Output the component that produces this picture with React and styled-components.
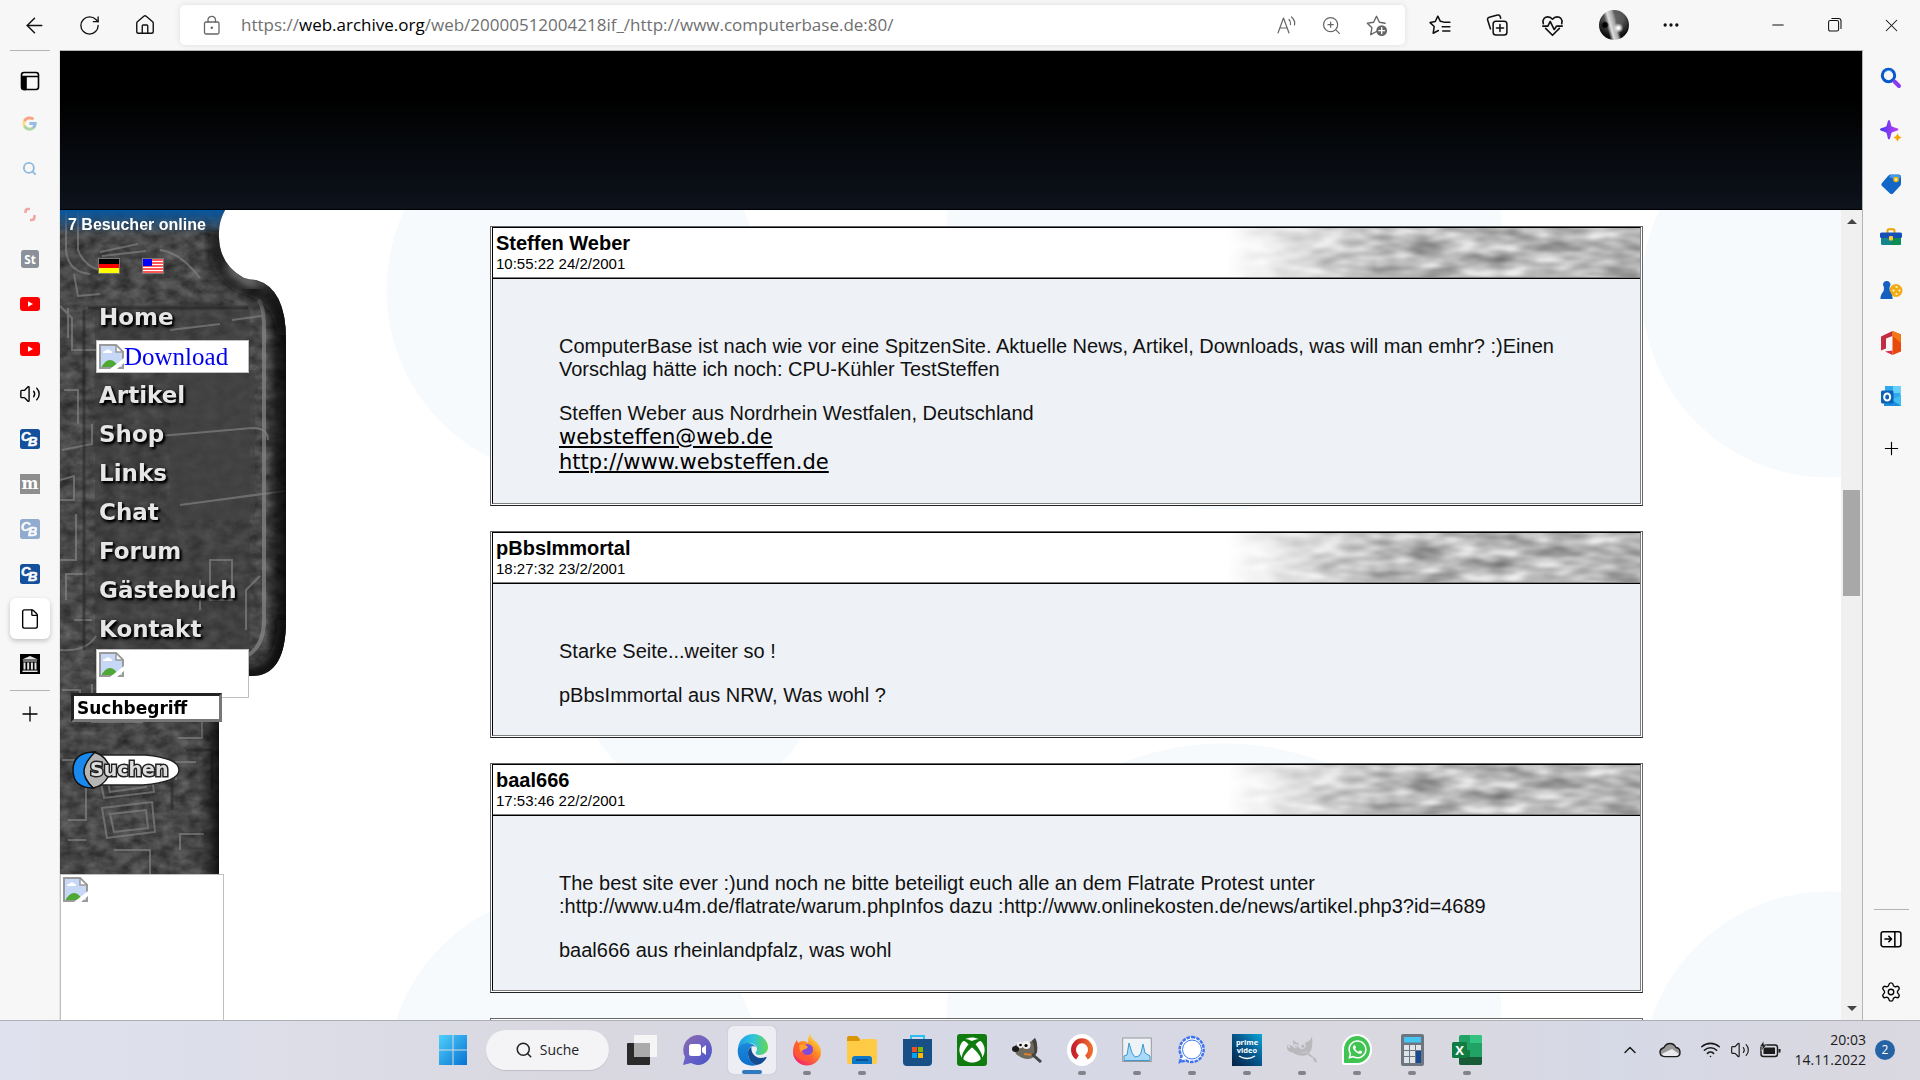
import React from "react";
import styled, { createGlobalStyle, css } from "styled-components";
import {
  ArrowLeft,
  RotateCw,
  House,
  ZoomIn,
  Search,
  Plus,
  Minus,
  X,
  Ellipsis,
  Volume2,
  File,
  Wifi,
  ChevronUp,
  Settings,
} from "lucide-react";
import { FcGoogle } from "react-icons/fc";
import { FaXbox, FaWhatsapp } from "react-icons/fa";
import { SiGimp } from "react-icons/si";

const CHROME = "#f7f7f7";
const LINE = "#b4b4b4";
const UI_FONT = `"Open Sans", "Noto Sans", sans-serif`;
const PAGE_FONT = `"Liberation Sans", Arial, sans-serif`;
const VERDANA = `"DejaVu Sans", Verdana, sans-serif`;

const GlobalStyle = createGlobalStyle`
  * { box-sizing: border-box; }
  body { margin: 0; background: ${CHROME}; font-family: ${PAGE_FONT}; }
  button { border: 0; padding: 0; background: none; color: inherit; font: inherit; }
  svg { display: block; flex: none; }
`;

const center = css`
  display: flex;
  align-items: center;
  justify-content: center;
`;

const Desktop = styled.div`
  height: 100vh;
  display: flex;
  flex-direction: column;
  overflow: hidden;
`;

const Toolbar = styled.header`
  height: 50px;
  flex: none;
  display: flex;
  align-items: center;
  padding: 0 1px 0 7px;
  color: #111;
`;

const ToolButton = styled.button`
  ${center};
  width: ${(props) => props.$width || 55}px;
  height: 40px;
`;

const AddressBar = styled.div`
  flex: 1;
  height: 40px;
  margin-left: 8px;
  padding: 0 6px 0 22px;
  display: flex;
  align-items: center;
  gap: 19px;
  background: #fff;
  border-radius: 5px;
  box-shadow: 0 0 6px rgba(0, 0, 0, 0.1);
  color: #666;
`;

const Url = styled.span`
  flex: 1;
  font: 17px/24px ${UI_FONT};
  color: #707070;
  white-space: nowrap;

  b {
    font-weight: 400;
    color: #000;
  }
`;

const AddressTools = styled.div`
  display: flex;
`;

const Avatar = styled.span`
  width: 30px;
  height: 30px;
  border-radius: 50%;
  background: radial-gradient(circle at 20% 50%, #000 0 2px, transparent 4px),
    radial-gradient(circle at 65% 60%, #fff 0 1px, transparent 5px),
    linear-gradient(75deg, transparent 30%, #ddd 40%, #aaa 52%, transparent 60%),
    radial-gradient(circle at 50% 25%, #666 0, #555 35%, #111 70%);
`;

const Middle = styled.div`
  flex: 1;
  min-height: 0;
  display: flex;
`;

const LeftRail = styled.nav`
  width: 60px;
  flex: none;
  display: flex;
  flex-direction: column;
  align-items: center;
  border-right: 1px solid #e4e4e4;
`;

const Separator = styled.hr`
  width: ${(props) => props.$width || 40}px;
  height: 1px;
  margin: 0;
  border: 0;
  background: ${LINE};
`;

const Tab = styled.button`
  ${center};
  width: 40px;
  height: 41px;
  margin: 2px 0;
  border-radius: 6px;
  opacity: ${(props) => (props.$faded ? 0.45 : 1)};
  ${(props) =>
    props.$active &&
    css`
      background: #fff;
      box-shadow: 0 2px 5px rgba(0, 0, 0, 0.22);
    `}
`;

const TabList = styled.div`
  display: flex;
  flex-direction: column;
  padding: 7px 0 4px;

  ${Tab}:first-child {
    margin-bottom: 0;
  }
`;

const RightRail = styled.aside`
  width: 57px;
  flex: none;
  display: flex;
  flex-direction: column;
  align-items: center;
  padding: 1px 1px 2px 0;
`;

const RailButton = styled.button`
  ${center};
  width: 40px;
  height: 53px;
`;

const Spacer = styled.div`
  flex: 1;
`;

const RailFooter = styled.div`
  display: flex;
  flex-direction: column;
  align-items: center;
  gap: 2px;
`;

const RailFooterButtons = styled.div`
  display: flex;
  flex-direction: column;
`;

const Viewport = styled.div`
  flex: 1;
  min-width: 0;
  display: flex;
  flex-direction: column;
  border: 1px solid ${LINE};
  border-width: 1px 1px 0 0;
`;

const Banner = styled.div`
  height: 159px;
  flex: none;
  background: linear-gradient(#000 30%, #0d131c);
  border-bottom: 1px solid #000;
`;

const Frames = styled.div`
  flex: 1;
  min-height: 0;
  display: flex;
`;

const blob = (x, y, r) =>
  `radial-gradient(circle at ${x}px ${y}px, #f6fafd ${r}px, transparent ${r + 1}px)`;

const blobs = [
  blob(514, 80, 187),
  blob(1164, 22, 277),
  blob(1769, 80, 187),
  blob(639, 466, 119),
  blob(514, 869, 187),
  blob(1164, 811, 277),
  blob(1769, 869, 187),
].join(",");

const Page = styled.div`
  flex: 1;
  min-width: 0;
  display: flex;
  overflow: hidden;
  background: ${blobs} #fff;
`;

const Scrollbar = styled.div`
  width: 21px;
  flex: none;
  display: flex;
  flex-direction: column;
  align-items: center;
  padding: 9px 0;
  background: #f0f0f0;
`;

const Arrow = styled.span`
  border: 5px solid transparent;
  border-${(props) => (props.$down ? "top" : "bottom")}-color: #444;
  border-${(props) => (props.$down ? "bottom" : "top")}-width: 0;
`;

const Track = styled.div`
  flex: 1;
  display: grid;
  grid-template-rows: 35fr 14fr 54fr;
`;

const Thumb = styled.div`
  grid-row: 2;
  width: 17px;
  background: #a8a8a8;
`;

const Sidebar = styled.aside`
  position: relative;
  width: 230px;
  flex: none;
`;

const Backdrop = styled.svg`
  position: absolute;
  inset: 0;
`;

const SidebarContent = styled.div`
  position: relative;
  display: flex;
  flex-direction: column;
  align-items: flex-start;
`;

const Visitors = styled.div`
  padding: 5px 8px 0;
  font: bold 16px/19px ${PAGE_FONT};
  color: #fff;
`;

const Flags = styled.div`
  display: flex;
  gap: 22px;
  padding: 24px 38px;
`;

const Menu = styled.nav`
  display: flex;
  flex-direction: column;
  padding-left: 36px;
`;

const MenuLink = styled.a`
  height: 39px;
  padding-left: 3px;
  font: bold 23px/39px ${VERDANA};
  color: #e6e6e6;
  text-decoration: none;
  text-shadow: 2px 2px 2px #000, 1px 2px 4px #000;
`;

const BrokenLink = styled.a`
  width: 153px;
  height: 33px;
  margin: 3px 0;
  padding-left: 2px;
  display: flex;
  align-items: center;
  border: 1px solid #c0c0c0;
  background: #fff;
  font: 25px/30px "Liberation Serif", "Times New Roman", serif;
  color: #0000ee;
  text-decoration: none;
`;

const BrokenBox = styled.div`
  width: ${(props) => props.$width}px;
  height: ${(props) => props.$height}px;
  padding: 2px;
  border: 1px solid #c0c0c0;
  background: #fff;
`;

const MenuImage = styled.div`
  padding-left: 36px;
`;

const SearchForm = styled.form`
  display: flex;
  flex-direction: column;
  align-items: flex-start;
  margin-top: -5px;
  padding: 0 0 84px 11px;
  gap: 28px;
`;

const SearchInput = styled.input`
  width: 151px;
  height: 29px;
  padding: 0 3px;
  border: 3px inset #777;
  background: #fff;
  font: bold 17px/20px ${VERDANA};
  color: #000;
`;

const Main = styled.main`
  flex: 1;
  min-width: 0;
  display: flex;
  flex-direction: column;
  gap: 25px;
  padding: 16px 198px 0 200px;
`;

const Post = styled.article`
  flex: none;
  padding: 0 1px 1px 1px;
  border: 1px solid #666;
  border-bottom-color: #222;
  background: #fff;
`;

const PostInner = styled.div`
  border: 1px solid #000;
  border-right-color: #808080;
  border-bottom-color: #808080;
`;

const PostHeader = styled.header`
  height: 50px;
  display: flex;
  justify-content: space-between;
  border-bottom: 1px solid #808080;
  background: #fff;
`;

const PostTitle = styled.div`
  padding: 4px 3px;
`;

const Author = styled.h2`
  margin: 0;
  font: bold 20px/23px ${PAGE_FONT};
  color: #000;
`;

const Time = styled.time`
  display: block;
  font: 15px/17px ${PAGE_FONT};
  color: #000;
`;

const PostBody = styled.div`
  padding: 56px 60px 28px 66px;
  border-top: 1px solid #000;
  background: #eef1f6;
  font: 20px/23px ${PAGE_FONT};
  color: #111;
`;

const Message = styled.p`
  margin: 0 0 21px;
`;

const ContactLink = styled.a`
  display: table;
  font: 21px/25px ${VERDANA};
  color: #000;
  text-decoration: underline;
`;

const Taskbar = styled.footer`
  height: 60px;
  flex: none;
  display: grid;
  grid-template-columns: 1fr auto 1fr;
  align-items: center;
  padding-bottom: 2px;
  border-top: 1px solid #aeaeb8;
  background: linear-gradient(90deg, #dfe2ee 0, #d9d8e1 30%, #d6d8e6 55%, #dad8df 72%, #d6d9e6 84%, #dad8e0);
`;

const Apps = styled.div`
  grid-column: 2;
  display: flex;
`;

const AppButton = styled.button`
  position: relative;
  ${center};
  width: 55px;
  height: 48px;

  &::after {
    content: "";
    display: ${(props) => (props.$state ? "block" : "none")};
    position: absolute;
    bottom: ${(props) => (props.$state === "active" ? 0 : -1)}px;
    width: ${(props) => (props.$state === "active" ? 20 : 8)}px;
    height: 4px;
    border-radius: 2px;
    background: ${(props) => (props.$state === "active" ? "#3079bf" : "#82828a")};
  }
`;

const AppTile = styled.span`
  ${center};
  width: 48px;
  height: 48px;
  border-radius: 5px;
  ${(props) =>
    props.$active &&
    css`
      background: #eeedf3;
      box-shadow: 0 0 1px rgba(0, 0, 0, 0.3);
    `}
`;

const SearchPill = styled.button`
  width: 123px;
  height: 40px;
  margin: 4px 6px 4px 5px;
  display: flex;
  align-items: center;
  justify-content: center;
  gap: 7px;
  border-radius: 20px;
  background: #f4f4f7;
  box-shadow: 0 1px 1px rgba(0, 0, 0, 0.12);
  font: 14px/20px ${UI_FONT};
  color: #222;
`;

const Tray = styled.div`
  grid-column: 3;
  justify-self: end;
  display: flex;
  align-items: center;
  padding-right: 25px;
  color: #1b1b1b;
`;

const TrayItem = styled.button`
  ${center};
  width: ${(props) => props.$width || 30}px;
  height: 40px;
`;

const Clock = styled.div`
  width: 76px;
  margin-right: 9px;
  font: 14px/20px ${UI_FONT};
  text-align: right;
`;

const Badge = styled.span`
  ${center};
  width: 20px;
  height: 20px;
  border-radius: 50%;
  background: #2563a5;
  color: #fff;
  font: 12px/20px ${UI_FONT};
`;

/* ---------- toolbar drawings ---------- */

const Line = ({ size = 20, children, width = 1.4, ...rest }) => (
  <svg
    width={size}
    height={size}
    viewBox="0 0 20 20"
    fill="none"
    stroke="currentColor"
    strokeWidth={width}
    strokeLinecap="round"
    strokeLinejoin="round"
    {...rest}
  >
    {children}
  </svg>
);

const LockIcon = () => (
  <Line size={20} width={1.3}>
    <rect x="2.500" y="7" width="14.500" height="12" rx="1.500" />
    <path d="M6 7V4.500a3.800 3.800 0 0 1 7.500 0V7" />
    <circle cx="9.800" cy="12.700" r=".6" fill="currentColor" />
  </Line>
);

const ReadAloudIcon = () => (
  <Line size={20} width={1.2}>
    <path d="M1 18 6.500 3 12 18M3 13h7M12 4.500q2 2 1.500 5M14.500 2q4 3.500 3 8" />
  </Line>
);

const StarAddIcon = () => (
  <Line size={23} width={1.2}>
    <path d="M17.500 8 12.500 7.200 10 2 7.500 7.200 2 8l4 4-1 6 5-2.800" />
    <circle cx="14.500" cy="14.500" r="4.700" fill="currentColor" stroke="none" />
    <path d="M14.500 12v5M12 14.500h5" stroke="#fff" />
  </Line>
);

const FavoritesIcon = () => (
  <Line size={22}>
    <path d="M12.500 7 10.200 6.500 8 2 5.700 6.800 1 7.800l3.700 3.600-.9 6.100L8.500 15M13.500 7.500H19M12 11.500h7M12.500 15.500H19" />
  </Line>
);

const CollectionsIcon = () => (
  <Line size={22}>
    <rect x="6.500" y="6.500" width="12.500" height="12.500" rx="2.500" />
    <path d="M12.700 9.500v6.500M9.500 12.700H16M4 13.500 1.500 5.500Q1 3.500 3 3l7.500-2q2-.5 2.500 1.500l.3 1.300" />
  </Line>
);

const HeartIcon = () => (
  <Line size={23}>
    <path d="M2 8.500C.8 4.500 3.500 2.500 6 2.500c2 0 3.200 1 4 2 .8-1 2-2 4-2 2.500 0 5.200 2 4 6M4 12.500l6 6 6-6M1.500 10.500H6l2-4 3.500 7 2-3h5" />
  </Line>
);

const RestoreIcon = () => (
  <Line size={16} width={1.3}>
    <rect x="2" y="4.500" width="12.500" height="13" rx="2" />
    <path d="M6 2h8.500Q17.500 2 17.500 5v9.500" />
  </Line>
);

/* ---------- tab drawings ---------- */

const VerticalTabsIcon = () => (
  <Line size={20} width={1.6}>
    <rect x="1.500" y="1.500" width="17" height="17" rx="2.500" />
    <path d="M2 5.500h16" />
    <path d="M2 6h4v12.500H3.500Q2 18 2 16.500z" fill="currentColor" />
  </Line>
);

const SnipIcon = () => (
  <svg width="20" height="20" viewBox="0 0 20 20" fill="none" stroke="#e8453c" strokeWidth="2.600">
    <path d="M5.500 9V7.500Q5.500 5 8 5h2M10 16h1.500q3 0 3-3v-2" />
  </svg>
);

const LetterIcon = ({ letter, color, serif, size }) => (
  <svg width={size} height={size} viewBox="0 0 20 20">
    <rect width="20" height="20" rx={serif ? 0 : 3} fill={color} />
    <text
      x="10"
      y="15"
      textAnchor="middle"
      fontSize={serif ? 16 : 13}
      fontWeight="bold"
      fontFamily={serif ? "DejaVu Serif" : "Open Sans"}
      fill="#fff"
    >
      {letter}
    </text>
  </svg>
);

const YoutubeIcon = () => (
  <svg width="20" height="14" viewBox="0 0 20 14">
    <rect width="20" height="14" rx="3" fill="#f00" />
    <path d="M8 4.200v5.600L13 7z" fill="#fff" />
  </svg>
);

const BaseIcon = () => (
  <svg width="20" height="20" viewBox="0 0 20 20">
    <rect width="20" height="20" rx="2.500" fill="#14509b" />
    <g fill="#fff" stroke="#fff" strokeWidth=".5" fontFamily="Liberation Sans" fontWeight="bold" fontStyle="italic">
      <text x="1" y="12" fontSize="13">C</text>
      <text x="8" y="17" fontSize="13">B</text>
    </g>
  </svg>
);

const ArchiveIcon = () => (
  <svg width="20" height="20" viewBox="0 0 20 20">
    <rect width="20" height="20" fill="#000" />
    <path d="M2 5.500 10 2l8 3.500zM3 6.500h14v1H3zM3.500 8.500h2v7h-2zM7.200 8.500h2v7h-2zM10.900 8.500h2v7h-2zM14.500 8.500h2v7h-2zM2.500 16.500h15v1.500h-15z" fill="#e4e4e4" />
  </svg>
);

/* ---------- right rail drawings ---------- */

const BlueSearchIcon = () => (
  <svg width="22" height="22" viewBox="0 0 22 22" fill="none">
    <circle cx="8.500" cy="8.500" r="6.200" stroke="#0a57c9" strokeWidth="3" />
    <path d="M4 6a5.500 5.500 0 0 1 8-1.500" stroke="#45a5f5" strokeWidth="1" />
    <path d="m14.500 14.500 4.500 4.500" stroke="#8a3bf0" strokeWidth="4" strokeLinecap="round" />
  </svg>
);

const SparkleIcon = () => (
  <svg width="24" height="24" viewBox="0 0 24 24">
    <defs>
      <linearGradient id="spark">
        <stop stopColor="#4238f0" />
        <stop offset="1" stopColor="#c63ff2" />
      </linearGradient>
    </defs>
    <path d="M10 1c1.500 0 1.700 5 2.700 6.300C14 8.500 19.500 9 19.500 10.500s-5.500 2-6.800 3.200c-1 1.300-1.200 6.800-2.700 6.800s-1.700-5.500-2.700-6.800C6 12.500 1 12 1 10.500s5-2 6.300-3.200C8.300 6 8.500 1 10 1z" fill="url(#spark)" />
    <path d="M18.500 14q.9 3.600 4.500 4.500-3.600.9-4.500 4.500-.9-3.600-4.500-4.500 3.600-.9 4.500-4.500z" fill="#f5a800" />
  </svg>
);

const TagIcon = () => (
  <svg width="22" height="22" viewBox="0 0 22 22">
    <path d="M10.500 1.500h8q2.500 0 2.500 2.500v6.500q0 1.500-1 2.500l-7 7.500q-1.500 1.500-3 0l-8-7.500q-1.500-1.500 0-3l6-7q1-1.500 2.500-1.500z" fill="#1266c8" />
    <path d="M10.500 2h8q2 0 2.500 2l-4 3-8-3z" fill="#3d9be8" />
    <circle cx="16" cy="6.500" r="2" fill="#fff4c0" stroke="#f7b500" strokeWidth="1.600" />
  </svg>
);

const ToolboxIcon = () => (
  <svg width="22" height="18" viewBox="0 0 22 18">
    <path d="M7.500 5V2.500Q7.500 1.200 9 1.200h4q1.500 0 1.500 1.300V5" fill="none" stroke="#e9a400" strokeWidth="2" />
    <rect x="1" y="8" width="20" height="9" rx="1.500" fill="#13858b" />
    <path d="M11 8h10v7.500Q21 17 19.500 17H11z" fill="#0d8c55" />
    <rect y="4.500" width="22" height="5.500" rx="1.500" fill="#1450b8" />
    <rect x="9" y="8" width="4" height="4.500" rx="1" fill="#ffc83a" />
  </svg>
);

const GamesIcon = () => (
  <svg width="23" height="20" viewBox="0 0 23 20">
    <circle cx="16" cy="10.500" r="6.500" fill="#efac16" />
    <path d="M7 1a3.500 3.500 0 0 1 2.800 5.600L9.500 8q-.5 3 2 6l1 3v2H.5v-2l1-3q3-3 2.500-6l-.3-1.400A3.500 3.500 0 0 1 7 1z" fill="#155fc0" />
    <g fill="#fff6cf">
      <circle cx="16.500" cy="7" r="1.100" />
      <circle cx="13.500" cy="10.500" r="1.100" />
      <circle cx="19.500" cy="10.500" r="1.100" />
      <circle cx="16.500" cy="14" r="1.100" />
    </g>
  </svg>
);

const OfficeIcon = () => (
  <svg width="22" height="26" viewBox="0 0 22 26">
    <path d="M1 6.500 12.500 1v5L6 8.500v10L1 20.500z" fill="#c22d42" />
    <path d="M12.500 1 21 4.500v17L12.500 25z" fill="#e74a0c" />
    <path d="M12.500 1 21 4.500V13l-8.500-7z" fill="#f27813" />
    <path d="m5 21.500 7.500-1V25z" fill="#db3048" />
  </svg>
);

const OutlookIcon = () => (
  <svg width="22" height="22" viewBox="0 0 22 22">
    <rect x="5" y="1" width="15.500" height="14" fill="#2fa9ee" />
    <path d="M13 1h7.500v7H13z" fill="#66d0fb" />
    <path d="m4 12 8 4 9-6v11H4z" fill="#1a8ddd" />
    <path d="m12 15 9-5v11z" fill="#43bdf6" />
    <rect x="1" y="5.500" width="12.500" height="13" rx="1.500" fill="#0d62b8" />
    <ellipse cx="7.200" cy="12" rx="3" ry="3.500" fill="none" stroke="#fff" strokeWidth="2" />
  </svg>
);

const PanelIcon = () => (
  <Line size={22}>
    <rect x="1" y="3.500" width="18" height="13.500" rx="2" />
    <path d="M13.500 3.500V17M4.500 10h5.500M8 7.500l2.500 2.500L8 12.500" />
  </Line>
);

/* ---------- page drawings ---------- */

const BrokenImage = () => (
  <svg width="25" height="25" viewBox="0 0 25 25">
    <path d="M1 1h16l7 7v16H1z" fill="#c6d8f5" />
    <path d="M4 9q0-2.500 3-2.500Q8.500 4 11 6.500 13.500 7 13 9z" fill="#fff" />
    <path d="M2 24q4-8 9-8t9 8z" fill="#4ea834" />
    <path d="M12 24H1V1h16l7 7v16H12" fill="none" stroke="#9a9a9a" strokeWidth="2" />
    <path d="m11 25 14-11v5l-7 6z" fill="#fff" />
    <path d="M17 1v7h7z" fill="#fff" stroke="#9a9a9a" strokeWidth="1.500" />
  </svg>
);

const GermanFlag = () => (
  <svg width="22" height="16" viewBox="0 0 22 16">
    <rect width="22" height="16" fill="#777" />
    <path d="M1 1h20v5H1z" fill="#000" />
    <path d="M1 6h20v4H1z" fill="#f00" />
    <path d="M1 10h20v5H1z" fill="#ff0" />
  </svg>
);

const UsFlag = () => (
  <svg width="22" height="16" viewBox="0 0 22 16">
    <rect width="22" height="16" fill="#777" />
    <path d="M1 1h20v14H1z" fill="#fff" />
    <path d="M1 2h20M1 5h20M1 8h20M1 11h20M1 14h20" stroke="#f22" strokeWidth="1.600" />
    <path d="M1 1h9v7H1z" fill="#00f" />
  </svg>
);

const BODY =
  "M0 0H165Q158 12 159 28Q160 55 184 68Q190 70 196 70Q226 78 226 130V410Q226 466 192 466H159V664H0Z";

const CircuitBackdrop = () => (
  <Backdrop width="230" height="664" viewBox="0 0 230 664" aria-hidden="true">
    <defs>
      <clipPath id="board">
        <path d={BODY} />
      </clipPath>
      <linearGradient id="sky" x2="0" y2="1">
        <stop stopColor="#07569f" />
        <stop offset="1" stopColor="#07569f" stopOpacity="0" />
      </linearGradient>
      <linearGradient id="edge">
        <stop stopColor="#000" stopOpacity="0" />
        <stop offset="1" stopColor="#000" stopOpacity=".75" />
      </linearGradient>
      <linearGradient id="side">
        <stop stopColor="#000" stopOpacity="0" />
        <stop offset=".55" stopColor="#000" stopOpacity=".6" />
        <stop offset="1" stopColor="#000" stopOpacity=".8" />
      </linearGradient>
      <filter id="soft" x="-20%" y="-20%" width="140%" height="140%">
        <feGaussianBlur stdDeviation="5" />
      </filter>
      <filter id="etch" x="0" y="0" width="100%" height="100%" colorInterpolationFilters="sRGB">
        <feTurbulence type="fractalNoise" baseFrequency=".07 .1" numOctaves="3" seed="8" />
        <feColorMatrix values=".3 0 0 0 .13  .3 0 0 0 .13  .3 0 0 0 .13  0 0 0 0 1" />
      </filter>
    </defs>
    <g clipPath="url(#board)">
      <rect width="230" height="664" filter="url(#etch)" />
      <path d="M35 95H190V450H35z" fill="#3c3c3c" opacity=".5" />
      <path d="M110 160h85v150h-85z" fill="#424242" opacity=".6" />
      <g fill="none" stroke="#858585" strokeWidth="2" opacity=".65">
        <path d="M6 0V40Q8 62 30 64M18 0V40Q24 56 40 60M14 64l4 22 22-2M40 42l38-8M42 46l44-5" />
        <path d="M0 96l12 12v32h30M2 240l30-6v-20M0 350h16v-46M0 440q26 2 36-14M8 128v-30M4 180h14v34M0 270l14-4v24H0M6 390v-26h20M14 410h18" />
        <path d="M100 226l92-8q16 0 16 12M120 295l105-14M110 120l50-6M172 110l30-4M100 40q20 2 40 28M150 350v40h22v-40zM140 370v30M186 420v-40l14-14" />
        <path d="M32 474V512h50V474M40 490h30M98 466v44M2 480h18v22" />
        <path d="M38 558l52-6 4 30-50 6zM46 564l38-5 2 18-36 5z" />
        <path d="M42 598l50-6 3 30-48 6zM50 604l36-4 2 18-34 4zM54 640h36v24M2 550h24v60H8M8 630h18M122 494h20v34h-24M116 570v-18h20M120 640v-16h24" />
      </g>
      <g fill="none" stroke="#222" strokeWidth="3" opacity=".5">
        <path d="M24 100v340M28 98h160M112 554v46M126 540h26v40" />
      </g>
      <path d="M198 90q6 4 6 30V410Q204 440 182 448" fill="none" stroke="#888" strokeWidth="4" opacity=".7" />
      <rect x="206" y="70" width="20" height="396" fill="url(#side)" />
      <g fill="none" stroke="#0a0a0a" strokeWidth="18" filter="url(#soft)">
        <path d="M160 22Q150 58 184 76Q222 84 226 125" opacity=".75" />
        <path d="M226 410Q226 466 180 466" opacity=".9" />
      </g>
      <path d="M168 56q14 16 30 19" fill="none" stroke="#8a8a8a" strokeWidth="7" filter="url(#soft)" />
      <rect x="139" y="466" width="20" height="198" fill="url(#edge)" />
      <rect width="230" height="24" fill="url(#sky)" />
    </g>
  </Backdrop>
);

const SuchenButton = () => (
  <svg width="110" height="40" viewBox="0 0 110 40">
    <path d="M24 5h50q34 3 34 15T72 35H24z" fill="#fff" stroke="#222" strokeWidth="1.500" />
    <path d="M22 2Q32 4 37 13v14Q32 36 22 38Q12 28 12 20T22 2z" fill="#b5b5b5" stroke="#111" strokeWidth="1.500" />
    <path d="M24 2Q2 2 2 20t20 18Q12 28 13 20T24 2z" fill="#1889ee" stroke="#111" strokeWidth="1.500" />
    <text
      x="19"
      y="26"
      fontFamily="DejaVu Sans"
      fontWeight="bold"
      fontSize="19"
      fill="#ddd"
      stroke="#222"
      strokeWidth="3"
      paintOrder="stroke"
    >
      Suchen
    </text>
  </svg>
);

const Grain = ({ id }) => (
  <svg width="430" height="49" viewBox="0 0 430 49" aria-hidden="true">
    <defs>
      <filter id={`grain${id}`} x="0" y="0" width="100%" height="100%" colorInterpolationFilters="sRGB">
        <feTurbulence type="fractalNoise" baseFrequency=".03 .08" numOctaves="2" seed="11" />
        <feColorMatrix values=".65 0 0 0 .4  .65 0 0 0 .4  .65 0 0 0 .4  0 0 0 0 1" />
      </filter>
      <linearGradient id={`fade${id}`}>
        <stop offset=".04" stopColor="#fff" />
        <stop offset=".4" stopColor="#fff" stopOpacity="0" />
      </linearGradient>
    </defs>
    <rect width="430" height="49" filter={`url(#grain${id})`} />
    <rect width="430" height="49" fill={`url(#fade${id})`} />
  </svg>
);

/* ---------- taskbar drawings ---------- */

const WindowsLogo = () => (
  <svg width="30" height="32" viewBox="0 0 30 32">
    <defs>
      <linearGradient id="win" x2="1" y2="1">
        <stop stopColor="#50d0fb" />
        <stop offset="1" stopColor="#0672d2" />
      </linearGradient>
    </defs>
    <path d="M1 1h13.500v14.500H1zM15.500 1H29v14.500H15.500zM1 16.500h13.500V31H1zM15.500 16.500H29V31H15.500z" fill="url(#win)" />
  </svg>
);

const TaskViewIcon = () => (
  <svg width="30" height="30" viewBox="0 0 30 30">
    <rect y="8" width="23" height="22" rx="1" fill="#2a2a2a" />
    <rect x="7" width="23" height="22" rx="1" fill="#f5f5f5" />
    <path d="M7 8h16v14H7z" fill="#ababab" />
  </svg>
);

const TeamsIcon = () => (
  <svg width="30" height="32" viewBox="0 0 30 32">
    <defs>
      <linearGradient id="chat" x2=".8" y2="1">
        <stop stopColor="#8a6aa8" />
        <stop offset=".5" stopColor="#6f63c4" />
        <stop offset="1" stopColor="#4d55c8" />
      </linearGradient>
    </defs>
    <path d="M15 1a14 15 0 1 1-6 28L1 31l2-8A15 15 0 0 1 15 1z" fill="url(#chat)" />
    <rect x="7" y="10" width="12" height="12" rx="2.500" fill="#fff" />
    <path d="m20 14 4-3v10l-4-3z" fill="#fff" />
  </svg>
);

const EdgeLogo = () => (
  <svg width="31" height="32" viewBox="0 0 31 32">
    <defs>
      <linearGradient id="edgeTop">
        <stop stopColor="#1e9de5" />
        <stop offset=".5" stopColor="#2fc3dd" />
        <stop offset="1" stopColor="#62d84e" />
      </linearGradient>
      <linearGradient id="edgeLeft" x2="0" y2="1">
        <stop stopColor="#1b8ad8" />
        <stop offset="1" stopColor="#0c6fd0" />
      </linearGradient>
    </defs>
    <path d="M1 14C2 5 9 0 16 0c9 0 15 7 15 13 0 5-4 8-9 8-3 0-4-1.500-3-3 3-4-1-9-7-9-5 0-9 2-11 5z" fill="url(#edgeTop)" />
    <path d="M1 14c3-6 14-7 18-1-4-2-8 1-8 6 0 7 4 11 9 12C8 34-1 26 1 14z" fill="url(#edgeLeft)" />
    <path d="M11 19c0-3 1-5 3.500-6-1 6 4 11 9 11 3 0 5-1 6-1 .5.500-3 7-10 8-5-1-8.500-6-8.500-12z" fill="#124d94" />
  </svg>
);

const FirefoxLogo = () => (
  <svg width="30" height="32" viewBox="0 0 30 32">
    <defs>
      <linearGradient id="fox" x1=".9" x2=".2" y2="1">
        <stop stopColor="#fff04a" />
        <stop offset=".45" stopColor="#ff8a23" />
        <stop offset="1" stopColor="#f31b70" />
      </linearGradient>
    </defs>
    <path d="M18 0q1 4 5 7 6 5 6 11a14 13.500 0 0 1-28 0q0-7 4-12 0 2 1 3 2-2 5-2 4 0 5 2 0-6 2-9z" fill="url(#fox)" />
    <path d="M5 6q0 3 3 4l4 1q-1 3-4 4 1 8 8 8 6 0 7-5-3 10-11 9Q1 25 2 13q1-4 3-7z" fill="#ff5b2c" opacity=".75" />
    <circle cx="15.500" cy="15.500" r="5.500" fill="#8149d8" />
    <path d="M7 11q5-2 8 1 2 2-2 3-3 1-4 3-2-3-2-7z" fill="#ffa12c" />
  </svg>
);

const FolderIcon = () => (
  <svg width="30" height="30" viewBox="0 0 30 30">
    <path d="M0 3q0-2 2-2h8l3 3v4H0z" fill="#d99408" />
    <path d="M0 6h12l3-2h13q2 0 2 2v21q0 2-2 2H2q-2 0-2-2z" fill="#ffcb45" />
    <path d="M5 29v-5q0-3 3-3h14q3 0 3 3v5z" fill="#0f78c9" />
    <path d="M9 25h12" stroke="#0a4180" strokeWidth="1.500" />
  </svg>
);

const StoreIcon = () => (
  <svg width="29" height="32" viewBox="0 0 29 32">
    <path d="M8 6V2h13v4" fill="none" stroke="#2cc0f2" strokeWidth="2" />
    <path d="M0 5h29v23q0 4-4 4H4q-4 0-4-4z" fill="#184f87" />
    <path d="M9 13h5v5H9z" fill="#f25022" />
    <path d="M15 13h5v5h-5z" fill="#7fba00" />
    <path d="M9 19h5v5H9z" fill="#00a4ef" />
    <path d="M15 19h5v5h-5z" fill="#ffb900" />
  </svg>
);

const XboxTile = styled.span`
  ${center};
  width: 30px;
  height: 32px;
  border-radius: 3px;
  background: #107c10;
  color: #fff;
`;

const GimpIcon = ({ grey }) =>
  grey ? (
    <SiGimp size={30} color="#b9b8bb" />
  ) : (
    <svg width="30" height="26" viewBox="0 0 30 26">
      <path d="M10 7q6 1 13-6 3 5 2 14-2 7-9 7-6 0-12-5l-2-6q1-5 8-4z" fill="#6f685d" />
      <path d="M23 1q3 5 2 14l-3 4q1-10-2-15z" fill="#45413c" />
      <circle cx="8" cy="8" r="3.200" fill="#eee" />
      <circle cx="14.500" cy="8" r="4" fill="#eee" />
      <circle cx="8.500" cy="8" r="1.300" />
      <circle cx="14" cy="8.500" r="1.600" />
      <ellipse cx="3.500" cy="12" rx="3.500" ry="3" fill="#1b1b1b" />
      <path d="m12 17 9 1" stroke="#d9822b" strokeWidth="2" />
      <path d="m20 17 9 8" stroke="#444" strokeWidth="3" />
    </svg>
  );

const MagnetIcon = () => (
  <svg width="30" height="32" viewBox="0 0 30 32">
    <defs>
      <linearGradient id="magnet">
        <stop stopColor="#c8202c" />
        <stop offset="1" stopColor="#ee6a2c" />
      </linearGradient>
    </defs>
    <ellipse cx="15" cy="16" rx="15" ry="16" fill="#fff" />
    <path d="M10.500 23.500a8.500 9 0 1 1 9 0" fill="none" stroke="url(#magnet)" strokeWidth="5" />
  </svg>
);

const MonitorIcon = () => (
  <svg width="30" height="26" viewBox="0 0 30 26">
    <rect x=".7" y="1" width="28.600" height="23.500" fill="#edf3f7" stroke="#999" />
    <path d="M2 19l3-1 2-12 3 10 3 4 4-1 2-3 2-9 2 9 5 3v4.500H2z" fill="#a9dbf8" stroke="#4196d0" />
  </svg>
);

const SignalIcon = () => (
  <svg width="28" height="30" viewBox="0 0 28 30">
    <path d="M14 2a12 12.500 0 1 1-6 23.500L2 27l1.500-6A12.500 12.500 0 0 1 14 2z" fill="#fff" stroke="#3e74ee" strokeWidth="2.500" strokeDasharray="3.500 1" />
    <circle cx="14" cy="14.500" r="9.500" fill="#fff" stroke="#3e74ee" />
  </svg>
);

const PrimeIcon = () => (
  <svg width="30" height="32" viewBox="0 0 30 32">
    <defs>
      <linearGradient id="prime" x1="0" y1="1" x2="1" y2="0">
        <stop stopColor="#052042" />
        <stop offset=".6" stopColor="#086098" />
        <stop offset="1" stopColor="#0aa8d6" />
      </linearGradient>
    </defs>
    <rect width="30" height="32" fill="url(#prime)" />
    <g fill="#fff" fontFamily="Open Sans" fontWeight="bold" fontSize="7.500" textAnchor="middle">
      <text x="15" y="11">prime</text>
      <text x="15" y="19">video</text>
    </g>
    <path d="M7 22q8 5 16 0" fill="none" stroke="#fff" strokeWidth="1.300" />
  </svg>
);

const WhatsappTile = styled.span`
  ${center};
  width: 30px;
  height: 31px;
  border-radius: 50% 50% 50% 10%;
  border: 2px solid #fff;
  background: #3fc351;
  color: #fff;
`;

const CalculatorIcon = () => (
  <svg width="23" height="32" viewBox="0 0 23 32">
    <rect width="23" height="32" rx="2" fill="#6d7680" />
    <rect x="3" y="3" width="17" height="5.500" fill="#45c6f2" />
    <path d="M3 11h5v5H3zM9 11h5v5H9zM15 11h5v5h-5zM3 17h5v5H3zM9 17h5v5H9zM3 23h5v6H3zM9 23h5v6H9z" fill="#dfe4e8" />
    <path d="M15 17h5v12h-5z" fill="#174a91" />
  </svg>
);

const ExcelIcon = () => (
  <svg width="30" height="30" viewBox="0 0 30 30">
    <rect x="7" width="23" height="30" rx="2" fill="#21a366" />
    <path d="M18 0h10q2 0 2 2v6H18z" fill="#33c481" />
    <path d="M7 15h11v7H7z" fill="#107c41" />
    <path d="M7 22h23v6q0 2-2 2H9q-2 0-2-2z" fill="#185c37" />
    <rect y="7" width="15" height="16" rx="1.500" fill="#107c41" />
    <text x="7.500" y="20" fontFamily="Open Sans" fontWeight="bold" fontSize="13" fill="#fff" textAnchor="middle">
      X
    </text>
  </svg>
);

const CloudIcon = () => (
  <svg width="22" height="16" viewBox="0 0 22 16">
    <path d="M6 14.500q-5 0-5-4.500 0-3 4-4.500Q7 1.500 11 1.500t6 4q4 .5 4 5 0 4-4 4z" fill="#999" stroke="#1b1b1b" strokeWidth="1.400" />
    <path d="M2.500 12 13 7l7 5q-1 2-3 2H6q-2 0-3.500-2z" fill="#e9e9ee" />
  </svg>
);

const BatteryIcon = () => (
  <svg width="22" height="17" viewBox="0 0 22 17">
    <rect x="2" y="4" width="16.500" height="11.500" rx="2.500" fill="none" stroke="#1b1b1b" strokeWidth="1.400" />
    <rect x="4.500" y="6.500" width="11.500" height="6.500" fill="#1b1b1b" />
    <path d="M19.500 8h2v3.500h-2z" fill="#1b1b1b" />
    <path d="M4.500 0 1 5.500h2.500L2.500 10 7.500 4H5z" fill="#1b1b1b" stroke="#dcdae3" strokeWidth=".5" />
  </svg>
);

/* ---------- data ---------- */

const TABS = [
  { title: "Google", icon: <FcGoogle size={17} />, faded: true },
  { title: "Suche", icon: <Search size={15} color="#1070c0" strokeWidth={3} />, faded: true },
  { title: "Snip", icon: <SnipIcon />, faded: true },
  { title: "St", icon: <LetterIcon letter="St" color="#8c9098" size={18} /> },
  { title: "YouTube", icon: <YoutubeIcon /> },
  { title: "YouTube", icon: <YoutubeIcon /> },
  { title: "Ton", icon: <Volume2 size={22} strokeWidth={1.5} /> },
  { title: "ComputerBase", icon: <BaseIcon /> },
  { title: "m", icon: <LetterIcon letter="m" color="#8e8e8e" size={20} serif /> },
  { title: "ComputerBase", icon: <BaseIcon />, faded: true },
  { title: "ComputerBase", icon: <BaseIcon /> },
  { title: "Neue Seite", icon: <File size={22} strokeWidth={1.5} />, active: true },
  { title: "Archive", icon: <ArchiveIcon /> },
];

const TOOLS = [
  ["Suchen", BlueSearchIcon],
  ["Entdecken", SparkleIcon],
  ["Shopping", TagIcon],
  ["Tools", ToolboxIcon],
  ["Spiele", GamesIcon],
  ["Office", OfficeIcon],
  ["Outlook", OutlookIcon],
];

const POSTS = [
  {
    author: "Steffen Weber",
    time: "10:55:22 24/2/2001",
    text: "ComputerBase ist nach wie vor eine SpitzenSite. Aktuelle News, Artikel, Downloads, was will man emhr? :)Einen Vorschlag hätte ich noch: CPU-Kühler TestSteffen",
    from: "Steffen Weber aus Nordrhein Westfalen, Deutschland",
    links: [
      ["mailto:websteffen@web.de", "websteffen@web.de"],
      ["http://www.websteffen.de", "http://www.websteffen.de"],
    ],
  },
  {
    author: "pBbsImmortal",
    time: "18:27:32 23/2/2001",
    text: "Starke Seite...weiter so !",
    from: "pBbsImmortal aus NRW, Was wohl ?",
  },
  {
    author: "baal666",
    time: "17:53:46 22/2/2001",
    text: "The best site ever :)und noch ne bitte beteiligt euch alle an dem Flatrate Protest unter :http://www.u4m.de/flatrate/warum.phpInfos dazu :http://www.onlinekosten.de/news/artikel.php3?id=4689",
    from: "baal666 aus rheinlandpfalz, was wohl",
  },
];

const APPS = [
  { title: "Taskansicht", icon: <TaskViewIcon /> },
  { title: "Chat", icon: <TeamsIcon /> },
  { title: "Edge", icon: <EdgeLogo />, state: "active" },
  { title: "Firefox", icon: <FirefoxLogo />, state: "open" },
  { title: "Explorer", icon: <FolderIcon />, state: "open" },
  { title: "Store", icon: <StoreIcon /> },
  { title: "Xbox", icon: <XboxTile><FaXbox size={26} /></XboxTile> },
  { title: "GIMP", icon: <GimpIcon /> },
  { title: "Magnet", icon: <MagnetIcon />, state: "open" },
  { title: "Monitor", icon: <MonitorIcon />, state: "open" },
  { title: "Signal", icon: <SignalIcon />, state: "open" },
  { title: "Prime Video", icon: <PrimeIcon />, state: "open" },
  { title: "GIMP 2", icon: <GimpIcon grey />, state: "open" },
  { title: "WhatsApp", icon: <WhatsappTile><FaWhatsapp size={21} /></WhatsappTile>, state: "open" },
  { title: "Rechner", icon: <CalculatorIcon />, state: "open" },
  { title: "Excel", icon: <ExcelIcon />, state: "open" },
];

const MENU = ["Artikel", "Shop", "Links", "Chat", "Forum", "Gästebuch", "Kontakt"];

/* ---------- sections ---------- */

const BrowserToolbar = () => (
  <Toolbar>
    <ToolButton aria-label="Zurück"><ArrowLeft size={25} strokeWidth={1.4} /></ToolButton>
    <ToolButton aria-label="Neu laden"><RotateCw size={23} strokeWidth={1.4} /></ToolButton>
    <ToolButton aria-label="Startseite"><House size={22} strokeWidth={1.5} /></ToolButton>
    <AddressBar>
      <LockIcon />
      <Url>
        https://<b>web.archive.org</b>/web/20000512004218if_/http://www.computerbase.de:80/
      </Url>
      <AddressTools>
        <ToolButton $width={45} aria-label="Vorlesen"><ReadAloudIcon /></ToolButton>
        <ToolButton $width={45} aria-label="Zoom"><ZoomIn size={21} strokeWidth={1.4} /></ToolButton>
        <ToolButton $width={45} aria-label="Favorit"><StarAddIcon /></ToolButton>
      </AddressTools>
    </AddressBar>
    <ToolButton $width={70} aria-label="Favoriten"><FavoritesIcon /></ToolButton>
    <ToolButton $width={43} aria-label="Sammlungen"><CollectionsIcon /></ToolButton>
    <ToolButton $width={68} aria-label="Leistung"><HeartIcon /></ToolButton>
    <ToolButton $width={55} aria-label="Profil"><Avatar /></ToolButton>
    <ToolButton $width={60} aria-label="Mehr"><Ellipsis size={20} /></ToolButton>
    <ToolButton $width={49} aria-hidden="true" />
    <ToolButton aria-label="Minimieren"><Minus size={18} strokeWidth={1.4} /></ToolButton>
    <ToolButton $width={59} aria-label="Wiederherstellen"><RestoreIcon /></ToolButton>
    <ToolButton aria-label="Schließen"><X size={21} strokeWidth={1.2} /></ToolButton>
  </Toolbar>
);

const TabRail = () => (
  <LeftRail>
    <Separator />
    <TabList>
      <Tab aria-label="Tabs"><VerticalTabsIcon /></Tab>
      {TABS.map((tab, i) => (
        <Tab key={i} aria-label={tab.title} $faded={tab.faded} $active={tab.active}>
          {tab.icon}
        </Tab>
      ))}
    </TabList>
    <Separator />
    <Tab aria-label="Neuer Tab"><Plus size={24} strokeWidth={1.3} /></Tab>
  </LeftRail>
);

const ToolRail = () => (
  <RightRail>
    {TOOLS.map(([title, Icon]) => (
      <RailButton key={title} aria-label={title}><Icon /></RailButton>
    ))}
    <RailButton aria-label="Hinzufügen"><Plus size={21} strokeWidth={1.3} /></RailButton>
    <Spacer />
    <RailFooter>
      <Separator $width={35} />
      <RailFooterButtons>
        <RailButton aria-label="Seitenleiste"><PanelIcon /></RailButton>
        <RailButton aria-label="Einstellungen"><Settings size={22} strokeWidth={1.5} /></RailButton>
      </RailFooterButtons>
    </RailFooter>
  </RightRail>
);

const SiteSidebar = () => (
  <Sidebar>
    <CircuitBackdrop />
    <SidebarContent>
      <Visitors>7 Besucher online</Visitors>
      <Flags>
        <GermanFlag />
        <UsFlag />
      </Flags>
      <Menu>
        <MenuLink href="#home">Home</MenuLink>
        <BrokenLink href="#download"><BrokenImage />Download</BrokenLink>
        {MENU.map((item) => (
          <MenuLink key={item} href={`#${item}`}>{item}</MenuLink>
        ))}
      </Menu>
      <MenuImage>
        <BrokenBox $width={153} $height={49}><BrokenImage /></BrokenBox>
      </MenuImage>
      <SearchForm onSubmit={(e) => e.preventDefault()}>
        <SearchInput aria-label="Suchbegriff" defaultValue="Suchbegriff" />
        <button type="submit" aria-label="Suchen"><SuchenButton /></button>
      </SearchForm>
      <BrokenBox $width={164} $height={300}><BrokenImage /></BrokenBox>
    </SidebarContent>
  </Sidebar>
);

const GuestbookPost = ({ post, id }) => (
  <Post>
    <PostInner>
      <PostHeader>
        <PostTitle>
          <Author>{post.author}</Author>
          <Time>{post.time}</Time>
        </PostTitle>
        <Grain id={id} />
      </PostHeader>
      <PostBody>
        <Message>{post.text}</Message>
        {post.from}
        {(post.links || []).map(([href, label]) => (
          <ContactLink key={href} href={href}>{label}</ContactLink>
        ))}
      </PostBody>
    </PostInner>
  </Post>
);

const WindowsTaskbar = () => (
  <Taskbar>
    <Apps>
      <AppButton aria-label="Start"><WindowsLogo /></AppButton>
      <SearchPill><Search size={18} strokeWidth={2} />Suche</SearchPill>
      {APPS.map((app) => (
        <AppButton key={app.title} aria-label={app.title} $state={app.state}>
          <AppTile $active={app.state === "active"}>{app.icon}</AppTile>
        </AppButton>
      ))}
    </Apps>
    <Tray>
      <TrayItem $width={40} aria-label="Mehr anzeigen"><ChevronUp size={20} strokeWidth={1.8} /></TrayItem>
      <TrayItem $width={40} aria-label="OneDrive"><CloudIcon /></TrayItem>
      <TrayItem $width={40} aria-label="WLAN"><Wifi size={21} strokeWidth={1.8} /></TrayItem>
      <TrayItem $width={20} aria-label="Lautstärke"><Volume2 size={20} strokeWidth={1.4} /></TrayItem>
      <TrayItem $width={40} aria-label="Akku"><BatteryIcon /></TrayItem>
      <Clock>
        20:03
        <br />
        14.11.2022
      </Clock>
      <Badge>2</Badge>
    </Tray>
  </Taskbar>
);

const App = () => (
  <>
    <GlobalStyle />
    <Desktop>
      <BrowserToolbar />
      <Middle>
        <TabRail />
        <Viewport>
          <Banner />
          <Frames>
            <Page>
              <SiteSidebar />
              <Main>
                {POSTS.map((post, i) => (
                  <GuestbookPost key={post.author} post={post} id={i} />
                ))}
                <Post />
              </Main>
            </Page>
            <Scrollbar>
              <Arrow />
              <Track>
                <Thumb />
              </Track>
              <Arrow $down />
            </Scrollbar>
          </Frames>
        </Viewport>
        <ToolRail />
      </Middle>
      <WindowsTaskbar />
    </Desktop>
  </>
);

export default App;
